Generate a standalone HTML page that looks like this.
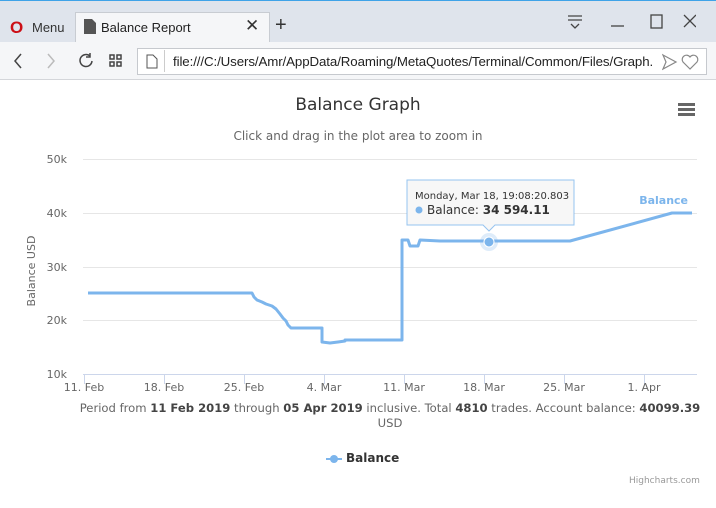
<!DOCTYPE html>
<html><head><meta charset="utf-8"><style>
body{margin:0;width:716px;height:508px;overflow:hidden;background:#fff;font-family:"Liberation Sans",sans-serif;position:relative}
.top{position:absolute;left:0;top:0;width:716px;height:42px;background:#dfe4ec;border-top:1px solid #3fa3e8;box-sizing:border-box}
.tab{position:absolute;left:75px;top:12px;width:195px;height:31px;background:#f5f6f8;border:1px solid #c8ccd2;border-bottom:none;box-sizing:border-box}
.bar{position:absolute;left:0;top:42px;width:716px;height:38px;background:#f5f6f8;border-bottom:1px solid #d4d6da;box-sizing:border-box}
.url{position:absolute;left:137px;top:48px;width:570px;height:27px;background:#fff;border:1px solid #c6c9ce;box-sizing:border-box}
.t{position:absolute;white-space:nowrap}
.hc{font-family:"DejaVu Sans",sans-serif;color:#666}
</style></head><body>
<div class="top"></div>
<div class="tab"></div>
<div class="t" style="left:10px;top:18px;color:#cc0f16;font-weight:bold;font-size:17px">O</div>
<div class="t" style="left:32px;top:20px;font-size:13px;color:#333">Menu</div>
<svg class="t" style="left:84px;top:19px" width="12" height="15"><path d="M0 0H8L12 4V15H0Z" fill="#555"/></svg>
<div class="t" style="left:101px;top:20px;font-size:13px;color:#222">Balance Report</div>
<div class="t" style="left:245px;top:16px;font-size:17px;color:#333">✕</div>
<div class="t" style="left:275px;top:14px;font-size:20px;color:#333">+</div>
<svg class="t" style="left:566px;top:14px" width="130" height="18" fill="none" stroke="#444" stroke-width="1.3"><path d="M2 2H16M2 6H16M5 10L9 14L13 10"/><path d="M45 12H58"/><rect x="85" y="1" width="11" height="13"/><path d="M118 1L130 13M130 1L118 13"/></svg>
<div class="bar"></div>
<svg class="t" style="left:12px;top:52px" width="120" height="18" fill="none" stroke="#444" stroke-width="1.5"><path d="M9 2L3 9L9 16"/><path d="M36 2L42 9L36 16" stroke="#bbb"/><path d="M78 4A6 6 0 1 0 80 9M78 1V5H74"/><rect x="98" y="3" width="4" height="4"/><rect x="105" y="3" width="4" height="4"/><rect x="98" y="10" width="4" height="4"/><rect x="105" y="10" width="4" height="4"/></svg>
<div class="url"></div>
<svg class="t" style="left:146px;top:54px" width="12" height="15" fill="none" stroke="#555"><path d="M1 1H7L11 5V14H1Z"/></svg>
<div class="t" style="left:164px;top:50px;width:1px;height:22px;background:#ccc"></div>
<div class="t" style="left:173px;top:54px;font-size:13.3px;color:#222;letter-spacing:-0.1px">file:///C:/Users/Amr/AppData/Roaming/MetaQuotes/Terminal/Common/Files/Graph.</div>
<svg class="t" style="left:662px;top:53px" width="38" height="18" fill="none" stroke="#888" stroke-width="1.2"><path d="M1 2L14 9L1 16L4 9Z"/><path d="M28 16L21 9A4 4 0 0 1 28 4A4 4 0 0 1 35 9Z"/></svg>

<div class="t hc" style="left:0;width:716px;text-align:center;top:95px;font-size:17px;color:#333">Balance Graph</div>
<div class="t hc" style="left:0;width:716px;text-align:center;top:129px;font-size:12px">Click and drag in the plot area to zoom in</div>
<svg class="t" style="left:678px;top:103px" width="18" height="14"><rect y="0" width="17" height="3" fill="#666"/><rect y="5" width="17" height="3" fill="#666"/><rect y="10" width="17" height="3" fill="#666"/></svg>

<svg class="t" style="left:0;top:140px" width="716" height="260" font-family="DejaVu Sans,sans-serif" font-size="11" fill="#666">
<g stroke="#e6e6e6"><path d="M83 19.5H697M83 73.5H697M83 127.5H697M83 180.5H697"/></g>
<path d="M83 234.5H697" stroke="#ccd6eb"/>
<g stroke="#ccd6eb"><path d="M84.5 234V244M164.5 234V244M244.5 234V244M324.5 234V244M404.5 234V244M484.5 234V244M564.5 234V244M644.5 234V244"/></g>
<g text-anchor="end"><text x="67" y="23">50k</text><text x="67" y="77">40k</text><text x="67" y="131">30k</text><text x="67" y="184">20k</text><text x="67" y="238">10k</text></g>
<text transform="translate(35,131) rotate(-90)" font-size="11" text-anchor="middle">Balance USD</text>
<g text-anchor="middle"><text x="84" y="251">11. Feb</text><text x="164" y="251">18. Feb</text><text x="244" y="251">25. Feb</text><text x="324" y="251">4. Mar</text><text x="404" y="251">11. Mar</text><text x="484" y="251">18. Mar</text><text x="564" y="251">25. Mar</text><text x="644" y="251">1. Apr</text></g>
<path d="M88 153H252L254 157L257 160L262 162L266 164L272 166L276 169L280 174L283 178L286 181L288 185L291 188L300 188L322 188L322 202L330 203L338 202L345 201L345 200L402 200L402 100L408 100L410 106L418 106L420 100L440 101L570 101L672 73L692 73" fill="none" stroke="#7cb5ec" stroke-width="3" stroke-linejoin="round"/>
<circle cx="489" cy="102" r="9" fill="#7cb5ec" opacity=".25"/><circle cx="489" cy="102" r="5" fill="#7cb5ec" stroke="#fff"/>
<text x="688" y="64" text-anchor="end" font-weight="bold" font-size="11" fill="#7cb5ec">Balance</text>
<path d="M407 40H574V85H495L489 91L483 85H407Z" fill="#f7f7f7" stroke="#7cb5ec" stroke-opacity=".8"/>
<text x="415" y="59" font-size="10" fill="#333">Monday, Mar 18, 19:08:20.803</text>
<circle cx="419" cy="70" r="3.5" fill="#7cb5ec"/>
<text x="427" y="74" font-size="12" fill="#333">Balance: <tspan font-weight="bold">34 594.11</tspan></text>
</svg>

<div class="t hc" style="left:0;width:716px;text-align:center;top:401px;font-size:11.6px;line-height:15px;white-space:normal;padding:0 14px 0 78px;box-sizing:border-box">Period from <b style="color:#444">11 Feb 2019</b> through <b style="color:#444">05 Apr 2019</b> inclusive. Total <b style="color:#444">4810</b> trades. Account balance: <b style="color:#444">40099.39</b> USD</div>
<svg class="t" style="left:326px;top:454px" width="16" height="10"><path d="M0 5H16" stroke="#7cb5ec" stroke-width="2"/><circle cx="8" cy="5" r="4" fill="#7cb5ec"/></svg>
<div class="t hc" style="left:346px;top:451px;font-size:12px;font-weight:bold;color:#333">Balance</div>
<div class="t hc" style="left:629px;top:476px;font-size:9px;color:#999">Highcharts.com</div>
</body></html>
